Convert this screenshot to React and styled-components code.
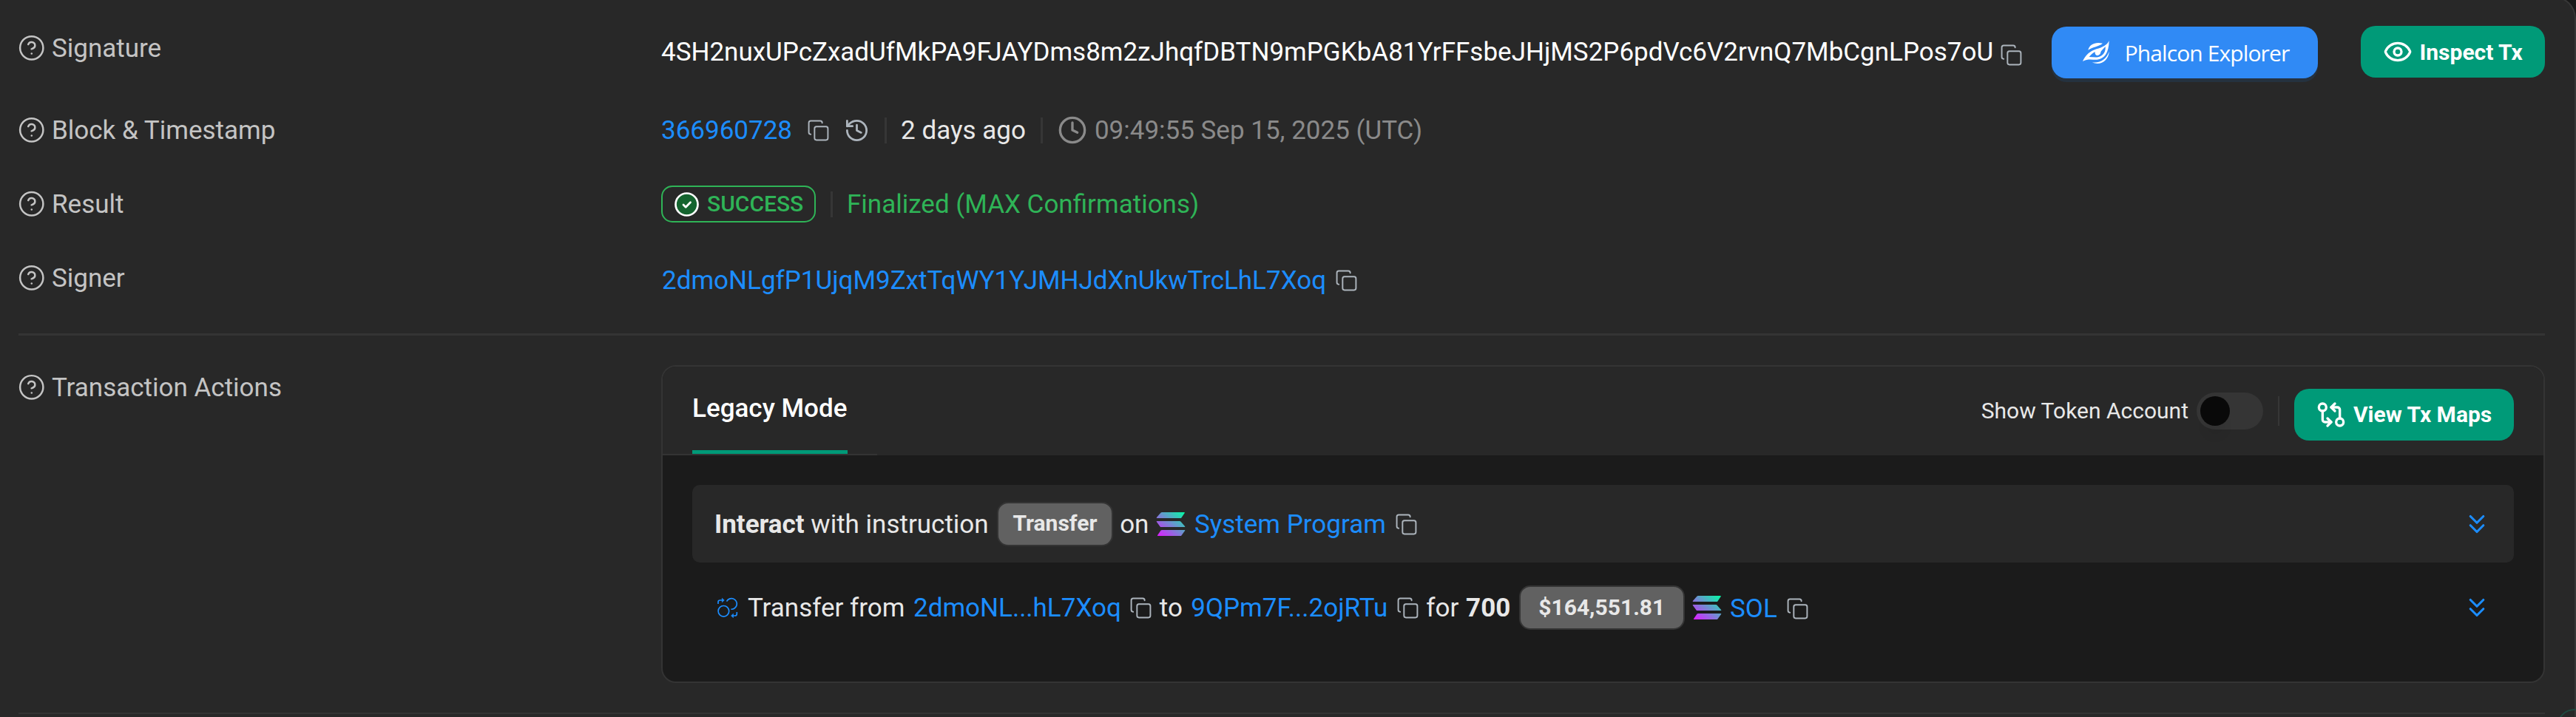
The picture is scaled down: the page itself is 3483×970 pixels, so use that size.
import React from "react";
import styled, { createGlobalStyle } from "styled-components";
import { CircleHelp, Copy, History, Clock, Eye, GitCompareArrows, ChevronsDown } from "lucide-react";

const Global = createGlobalStyle`
  *, *::before, *::after { box-sizing: border-box; }
  html, body { margin: 0; background: #181818; }
  body { font-family: Roboto, "Liberation Sans", sans-serif; font-size: 35px; line-height: 50px; color: #e8e8e8; overflow: hidden; }
  svg { display: block; flex: none; }
`;

const Screen = styled.div`
  position: relative;
  width: 3483px;
  height: 970px;
  overflow: hidden;
`;
const Card = styled.main`
  display: flex;
  flex-direction: column;
  height: 1000px;
  margin: -5px 0 0 -30px;
  padding: 38px 40px 0 55px;
  background: #282828;
  border-right: 2px solid #363636;
  border-top: 2px solid #363636;
  border-top-right-radius: 30px;
`;
const Row = styled.section`
  display: flex;
  align-items: center;
  height: ${(p) => p.$h || 50}px;
  margin-bottom: ${(p) => p.$gap ?? 50}px;
`;
const Label = styled.div`
  display: flex;
  align-items: center;
  width: 869px;
  flex: none;
  color: #c4c4c4;
  padding-top: ${(p) => p.$drop || 0}px;
  padding-bottom: ${(p) => p.$lift || 0}px;
  svg { margin-right: 8.5px; margin-left: -1px; }
`;
const Value = styled.div`
  display: flex;
  align-items: center;
  flex: 1;
  padding-top: ${(p) => p.$drop || 0}px;
`;
const Text = styled.span`
  flex: none;
  white-space: pre;
  padding-top: ${(p) => p.$pt ?? 2}px;
  margin-left: ${(p) => p.$ml || 0}px;
  font-weight: ${(p) => p.$weight || "inherit"};
  color: ${(p) => p.$color || "inherit"};
`;
const Link = styled(Text)`
  color: #1c8dff;
`;
const Icon = styled.span`
  display: flex;
  flex: none;
  margin-left: ${(p) => p.$ml || 0}px;
  margin-top: ${(p) => p.$mt || 0}px;
  color: ${(p) => p.$color || "#adb5bd"};
`;
const Bar = styled.i`
  width: 2.5px;
  height: ${(p) => p.$h || 35}px;
  margin-left: ${(p) => p.$ml || 0}px;
  background: #363636;
`;
const Button = styled.button`
  display: flex;
  align-items: center;
  flex: none;
  height: 70px;
  width: ${(p) => p.$w}px;
  padding: 0 0 0 30px;
  border: 0;
  border-radius: 20px;
  background: #009a78;
  color: #fff;
  font: 700 30px/50px Roboto, sans-serif;
  white-space: nowrap;
`;
const PhalconButton = styled(Button)`
  margin: 2px auto 0 39px;
  padding-left: 42px;
  background: #308af5;
  box-shadow: 0 5px 0 #25323f;
  font: 400 30px/50px "Open Sans", "Noto Sans", sans-serif;
  letter-spacing: -0.9px;
`;
const MapsButton = styled(Button)`
  margin: 10px 0 0 20px;
`;
const Badge = styled.span`
  display: flex;
  align-items: center;
  width: 209px;
  height: 50px;
  padding-left: 16px;
  border: 2px solid #2fb457;
  border-radius: 15px;
  color: #2fb457;
  font-size: 30px;
  font-weight: 500;
`;
const Divider = styled.hr`
  width: 3416px;
  height: 3px;
  flex: none;
  margin: 0 0 40px;
  border: 0;
  background: #343434;
`;
const Actions = styled.section`
  display: flex;
  align-items: flex-start;
`;
const Panel = styled.div`
  width: 2547px;
  height: 430px;
  border: 2px solid #343434;
  border-radius: 20px;
  background: #1b1b1b;
  overflow: hidden;
`;
const PanelHead = styled.header`
  display: flex;
  height: 120px;
  padding-right: 40px;
  background: #282828;
`;
const Tabs = styled.nav`
  display: flex;
  width: 290px;
  padding-left: 40px;
  border-bottom: 2px solid #343434;
`;
const Tab = styled.span`
  width: 210px;
  padding-top: 32px;
  border-bottom: 5px solid #009a78;
  color: #fff;
  font-weight: 500;
  white-space: nowrap;
`;
const Tools = styled.div`
  display: flex;
  align-items: center;
  flex: 1;
  height: 50px;
  margin-top: 35px;
  justify-content: flex-end;
  font-size: 30px;
`;
const Toggle = styled.span`
  width: 90px;
  height: 50px;
  margin-left: 10.5px;
  padding: 5px;
  border-radius: 25px;
  background: #353535;
  &::before {
    content: "";
    display: block;
    width: 40px;
    height: 40px;
    border-radius: 50%;
    background: #090909;
    box-shadow: 0 20px 15px -7px rgba(0, 0, 0, 0.06);
  }
`;
const PanelBody = styled.div`
  padding: 40px;
`;
const Instruction = styled.div`
  display: flex;
  align-items: center;
  height: ${(p) => (p.$nested ? 122 : 105)}px;
  padding: ${(p) => (p.$nested ? "0 40px 0 34px" : "1px 40px 0 30px")};
  border-radius: 10px;
  background: ${(p) => (p.$nested ? "transparent" : "#282828")};
`;
const Chip = styled.span`
  width: ${(p) => p.$w}px;
  height: 60px;
  margin-left: ${(p) => p.$ml}px;
  border: 2px solid #343434;
  border-radius: 15px;
  background: #616161;
  text-align: center;
  font-size: 30px;
  font-weight: 700;
  line-height: ${(p) => p.$lh || 54}px;
`;
const Expand = styled.span`
  margin-left: auto;
  margin-right: -11px;
  color: #1c8dff;
`;
const Floating = styled.div`
  position: absolute;
  left: 3457px;
  top: 959px;
  width: 80px;
  height: 80px;
  border: 2px solid #1f483f;
  border-radius: 24px;
`;
const Underline = styled.hr`
  width: 3416px;
  height: 2px;
  flex: none;
  margin: 40px 0 0;
  border: 0;
  background: #343434;
`;

const CopyIcon = ({ ml, mt }) => (
  <Icon $ml={ml} $mt={mt}><Copy size={31} strokeWidth={1.5} /></Icon>
);
const Help = ({ lift, drop, children }) => (
  <Label $lift={lift} $drop={drop}><CircleHelp size={37.5} strokeWidth={1.6} /><Text>{children}</Text></Label>
);
const Solana = ({ ml, id }) => (
  <Icon $ml={ml}>
    <svg width="40" height="32" viewBox="0 0 40 32">
      <defs>
        <linearGradient id={id} x1="36" y1="-3" x2="6" y2="34" gradientUnits="userSpaceOnUse">
          <stop offset="0" stopColor="#00ffa3" />
          <stop offset="1" stopColor="#dc1fff" />
        </linearGradient>
      </defs>
      <g fill={`url(#${id})`}>
        <path d="M6.6 0.5Q7.2 0 8 0H38Q39.4 0 38.7 1.1L34.4 7.4Q33.9 8 33 8H1.4Q.2 8 .9 6.9Z" />
        <path d="M33.4 12.5Q32.8 12 32 12H1.4Q.2 12 .9 13.1L5.6 19.4Q6.1 20 7 20H38.6Q39.8 20 39.1 18.9Z" />
        <path d="M6.6 24.5Q7.2 24 8 24H38.6Q39.8 24 39.1 25.1L34.4 31.4Q33.9 32 33 32H2.6Q1.4 32 2.1 30.9Z" />
      </g>
    </svg>
  </Icon>
);
const PhalconLogo = () => (
  <svg width="36" height="32" viewBox="0 0 108 96" fill="#fff">
    <path d="M22 38C28 14 52 4 81 11C66 24 42 24 22 38Z" />
    <path fillRule="evenodd" d="M107 0C100 18 80 27 56 34C30 42 12 58 0 84C20 72 40 78 58 77C88 74 106 50 107 0ZM92 24C94 44 84 62 62 67C50 69 38 66 26 66C34 56 42 50 50 45C48 58 60 64 67 57C75 54 70 46 78 39Z" />
    <path d="M107 44C106 78 74 104 38 88C74 92 96 74 107 44Z" />
  </svg>
);
const TransferIcon = () => (
  <svg width="28" height="28" viewBox="0 0 28 28" fill="none" stroke="#1c8dff" strokeWidth="1.7">
    <circle cx="8.4" cy="18.8" r="7.3" />
    <path d="M12.5 5.6A7.3 7.3 0 1 1 18.4 16.2" />
    <path d="M1 9V6.5Q1 4 3.5 4H7" />
    <path d="M6.3 1.2L9.3 4L6.3 6.8Z" fill="#1c8dff" strokeWidth=".6" />
    <path d="M26.3 20V22.5Q26.3 25 23.8 25H21" />
    <path d="M21.5 22.2L18.5 25L21.5 27.8Z" fill="#1c8dff" strokeWidth=".6" />
  </svg>
);
const SuccessIcon = () => (
  <svg width="33" height="33" viewBox="0 0 33 33">
    <circle cx="16.5" cy="16.5" r="15" fill="#14642f" stroke="#fff" strokeWidth="2.7" />
    <path d="M12 17l3.2 3.2L21.5 13.8" fill="none" stroke="#fff" strokeWidth="2.8" strokeLinecap="round" strokeLinejoin="round" />
  </svg>
);

export default function App() {
  return (
    <Screen>
      <Global />
      <Card>
        <Row $h={70} $gap={46}>
          <Help lift={10}>Signature</Help>
          <Value>
            <Text $color="#fff">4SH2nuxUPcZxadUfMkPA9FJAYDms8m2zJhqfDBTN9mPGKbA81YrFFsbeJHjMS2P6pdVc6V2rvnQ7MbCgnLPos7oU</Text>
            <CopyIcon ml={9} mt={8} />
            <PhalconButton $w={360}><PhalconLogo /><Text $ml={20.5}>Phalcon Explorer</Text></PhalconButton>
            <Button $w={249}><Eye size={40} /><Text $ml={9.5}>Inspect Tx</Text></Button>
          </Value>
        </Row>
        <Row>
          <Help>Block &amp; Timestamp</Help>
          <Value>
            <Link>366960728</Link>
            <CopyIcon ml={19.5} />
            <Icon $ml={19.5}><History size={35} strokeWidth={1.9} /></Icon>
            <Bar $ml={20} />
            <Text $ml={19.5}>2 days ago</Text>
            <Bar $ml={20.5} />
            <Icon $ml={20} $color="#8a8a8a"><Clock size={40} /></Icon>
            <Text $ml={10} $color="#8a8a8a">09:49:55 Sep 15, 2025 (UTC)</Text>
          </Value>
        </Row>
        <Row>
          <Help>Result</Help>
          <Value>
            <Badge>
              <SuccessIcon />
              <Text $ml={11} $pt={0}>SUCCESS</Text>
            </Badge>
            <Bar $ml={20} />
            <Text $ml={19.5} $color="#2fb457">Finalized (MAX Confirmations)</Text>
          </Value>
        </Row>
        <Row>
          <Help>Signer</Help>
          <Value $drop={6}>
            <Link $ml={1}>2dmoNLgfP1UjqM9ZxtTqWY1YJMHJdXnUkwTrcLhL7Xoq</Link>
            <CopyIcon ml={12} />
          </Value>
        </Row>
        <Divider />
        <Actions>
          <Help drop={4}>Transaction Actions</Help>
          <Panel>
            <PanelHead>
              <Tabs><Tab>Legacy Mode</Tab></Tabs>
              <Tools>
                <Text $pt={0}>Show Token Account</Text>
                <Toggle />
                <Bar $ml={20} $h={40} />
                <MapsButton $w={297}><GitCompareArrows size={40} /><Text $ml={10} $pt={0}>View Tx Maps</Text></MapsButton>
              </Tools>
            </PanelHead>
            <PanelBody>
              <Instruction>
                <Text $weight={700}>Interact</Text>
                <Text> with instruction</Text>
                <Chip $ml={11} $w={157.5}>Transfer</Chip>
                <Text $ml={9}>on</Text>
                <Solana ml={10} id="solProgram" />
                <Link $ml={11.5}>System Program</Link>
                <CopyIcon ml={12.3} />
                <Expand><ChevronsDown size={42} strokeWidth={1.8} /></Expand>
              </Instruction>
              <Instruction $nested>
                <TransferIcon />
                <Text $ml={13}>Transfer from</Text>
                <Link $ml={11.6}>2dmoNL...hL7Xoq</Link>
                <CopyIcon ml={11.6} />
                <Text $ml={9.4}>to</Text>
                <Link $ml={11.4}>9QPm7F...2ojRTu</Link>
                <CopyIcon ml={12} />
                <Text $ml={9}>for</Text>
                <Text $ml={9.8} $weight={700}>700</Text>
                <Chip $ml={11.7} $w={223.5} $lh={56}>$164,551.81</Chip>
                <Solana ml={10.5} id="solToken" />
                <Link $ml={11} $pt={3}>SOL</Link>
                <CopyIcon ml={12.4} mt={2} />
                <Expand><ChevronsDown size={42} strokeWidth={1.8} /></Expand>
              </Instruction>
            </PanelBody>
          </Panel>
        </Actions>
        <Underline />
      </Card>
      <Floating />
    </Screen>
  );
}
